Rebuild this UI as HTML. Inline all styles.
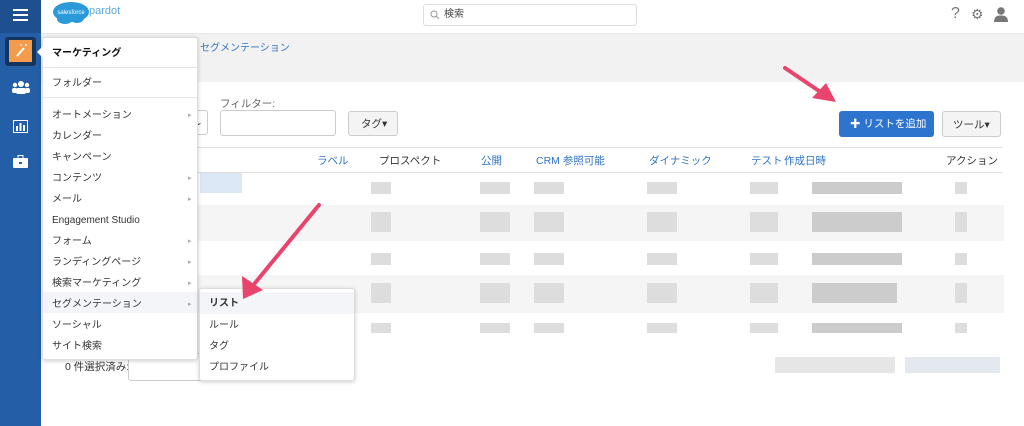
<!DOCTYPE html>
<html><head><meta charset="utf-8"><style>
*{margin:0;padding:0;box-sizing:border-box}
body{width:1024px;height:426px;overflow:hidden;background:#fff;font-family:"Liberation Sans","Noto Sans CJK JP",sans-serif;font-size:11px;color:#333;position:relative}
.a{position:absolute}
.side{left:0;top:0;width:41px;height:426px;background:#235ea6}
.menu{left:42px;top:37px;width:156px;height:323px;background:#fff;border:1px solid #ddd;border-radius:3px;box-shadow:0 1px 4px rgba(0,0,0,.2)}
.mi{position:absolute;left:9px;font-size:10px;line-height:14px;color:#333;white-space:nowrap;margin-top:3px}
.ar{position:absolute;left:145px;font-size:7px;line-height:14px;color:#aaa;margin-top:3px}
.sub{left:199px;top:288px;width:156px;height:93px;background:#fff;border:1px solid #ddd;border-radius:3px;box-shadow:0 1px 4px rgba(0,0,0,.2)}
.th{position:absolute;top:154px;font-size:10.5px;line-height:14px;color:#2f73c4;white-space:nowrap}
.gb{position:absolute;background:#ddd;height:12px}
</style></head><body>
<div class="a side"></div>
<div class="a" style="left:0;top:0;width:41px;height:33px;background:#1e4f8e"></div>
<div class="a" style="left:13px;top:9px;width:15px;height:2px;background:#fff;box-shadow:0 5px 0 #fff,0 10px 0 #fff"></div>
<div class="a" style="left:5px;top:37px;width:31px;height:29px;background:#15355f;border-radius:3px"></div>
<div class="a" style="left:9px;top:40px;width:23px;height:22px;background:#f39c4e"></div>
<svg class="a" style="left:9px;top:40px" width="23" height="22"><line x1="8" y1="16" x2="15" y2="8" stroke="#fff" stroke-width="2"/><circle cx="17" cy="5" r="1" fill="#fff"/><circle cx="12" cy="5" r="0.8" fill="#fff"/></svg>
<svg class="a" style="left:12px;top:80px" width="18" height="14"><circle cx="9" cy="4" r="3" fill="#fff"/><circle cx="3" cy="5" r="2.2" fill="#fff"/><circle cx="15" cy="5" r="2.2" fill="#fff"/><rect x="4" y="8" width="10" height="6" rx="2" fill="#fff"/><rect x="0" y="8" width="5" height="5" rx="2" fill="#fff"/><rect x="13" y="8" width="5" height="5" rx="2" fill="#fff"/></svg>
<svg class="a" style="left:13px;top:120px" width="15" height="13"><rect x="0.5" y="0.5" width="14" height="12" fill="none" stroke="#fff"/><rect x="3" y="6" width="2" height="5" fill="#fff"/><rect x="6.5" y="3" width="2" height="8" fill="#fff"/><rect x="10" y="5" width="2" height="6" fill="#fff"/></svg>
<svg class="a" style="left:13px;top:155px" width="15" height="13"><rect x="5" y="0.5" width="5" height="3" fill="none" stroke="#fff"/><rect x="0" y="3" width="15" height="10" rx="1" fill="#fff"/><rect x="6" y="7" width="3" height="2" fill="#235ea6"/></svg>
<!-- top bar -->
<div class="a" style="left:41px;top:33px;width:983px;height:49px;background:#f2f2f2;border-top:1px solid #e6e6e6"></div>
<svg class="a" style="left:52px;top:0px" width="38" height="28"><ellipse cx="19" cy="12" rx="18" ry="10" fill="#2a9ad8"/><ellipse cx="13" cy="19" rx="8" ry="5" fill="#2a9ad8"/><ellipse cx="25" cy="18" rx="7" ry="5" fill="#2a9ad8"/><text x="19" y="14" font-size="6" fill="#fff" text-anchor="middle" font-family="Liberation Sans">salesforce</text></svg>
<div class="a" style="left:89px;top:4px;font-size:11px;line-height:14px;color:#5ea7dc">pardot</div>
<div class="a" style="left:423px;top:4px;width:214px;height:22px;border:1px solid #ddd;border-radius:3px"></div>
<svg class="a" style="left:430px;top:10px" width="10" height="10"><circle cx="4" cy="4" r="3" fill="none" stroke="#999"/><line x1="6" y1="6" x2="9" y2="9" stroke="#999"/></svg>
<div class="a" style="left:444px;top:8px;font-size:10px;line-height:14px;color:#444">検索</div>
<div class="a" style="left:951px;top:5px;font-size:16px;line-height:18px;color:#777">?</div>
<div class="a" style="left:971px;top:5px;font-size:14px;line-height:18px;color:#777">⚙</div>
<svg class="a" style="left:993px;top:7px" width="16" height="15"><circle cx="8" cy="4" r="3.8" fill="#777"/><path d="M1 15 Q1 8 8 8.5 Q15 8 15 15Z" fill="#777"/></svg>
<div class="a" style="left:200px;top:42px;font-size:10px;line-height:14px;color:#2f73c4">セグメンテーション</div>
<!-- filters -->
<div class="a" style="left:190px;top:110px;width:18px;height:25px;border:1px solid #ccc;border-left:none;border-radius:0 3px 3px 0;font-size:9px;padding:6px 0 0 5px">⌄</div>
<div class="a" style="left:220px;top:97px;font-size:10.5px;line-height:14px;color:#666">フィルター:</div>
<div class="a" style="left:220px;top:110px;width:116px;height:26px;border:1px solid #ccc;border-radius:3px"></div>
<div class="a" style="left:348px;top:111px;width:50px;height:25px;border:1px solid #ccc;border-radius:3px;background:#f4f4f4;font-size:10.5px;line-height:14px;padding:5px 0 0 12px">タグ▾</div>
<div class="a" style="left:839px;top:111px;width:95px;height:26px;background:#2d74cf;border-radius:3px;color:#fff;font-size:10.5px;line-height:14px;padding:6px 0 0 11px">✚ リストを追加</div>
<div class="a" style="left:942px;top:111px;width:59px;height:26px;border:1px solid #ccc;border-radius:3px;background:#f4f4f4;font-size:10.5px;line-height:14px;padding:6px 0 0 10px">ツール▾</div>
<!-- table -->
<div class="a" style="left:192px;top:147px;width:810px;height:1px;background:#ddd"></div>
<div class="a" style="left:192px;top:172px;width:810px;height:1px;background:#ddd"></div>
<div class="th" style="left:317px">ラベル</div>
<div class="th" style="left:379px;color:#333">プロスペクト</div>
<div class="th" style="left:481px">公開</div>
<div class="th" style="left:536px">CRM 参照可能</div>
<div class="th" style="left:649px">ダイナミック</div>
<div class="th" style="left:751px">テスト</div>
<div class="th" style="left:784px">作成日時</div>
<div class="th" style="left:946px;color:#333">アクション</div>
<div class="a" style="left:192px;top:205px;width:812px;height:36px;background:#f5f5f5"></div>
<div class="a" style="left:192px;top:275px;width:812px;height:38px;background:#f5f5f5"></div>
<div class="a" style="left:200px;top:173px;width:42px;height:20px;background:#dde8f6"></div>
<div class="gb" style="left:371px;top:182px;width:20px"></div><div class="gb" style="left:480px;top:182px;width:30px"></div><div class="gb" style="left:534px;top:182px;width:30px"></div><div class="gb" style="left:647px;top:182px;width:30px"></div><div class="gb" style="left:750px;top:182px;width:28px"></div><div class="gb" style="left:812px;top:182px;width:90px;background:#ccc"></div><div class="gb" style="left:955px;top:182px;width:12px"></div>
<div class="gb" style="left:371px;top:212px;width:20px;height:20px"></div><div class="gb" style="left:480px;top:212px;width:30px;height:20px"></div><div class="gb" style="left:534px;top:212px;width:30px;height:20px"></div><div class="gb" style="left:647px;top:212px;width:30px;height:20px"></div><div class="gb" style="left:750px;top:212px;width:28px;height:20px"></div><div class="gb" style="left:812px;top:212px;width:90px;height:20px;background:#ccc"></div><div class="gb" style="left:955px;top:212px;width:12px;height:20px"></div>
<div class="gb" style="left:371px;top:253px;width:20px"></div><div class="gb" style="left:480px;top:253px;width:30px"></div><div class="gb" style="left:534px;top:253px;width:30px"></div><div class="gb" style="left:647px;top:253px;width:30px"></div><div class="gb" style="left:750px;top:253px;width:28px"></div><div class="gb" style="left:812px;top:253px;width:90px;background:#ccc"></div><div class="gb" style="left:955px;top:253px;width:12px"></div>
<div class="gb" style="left:371px;top:283px;width:20px;height:20px"></div><div class="gb" style="left:480px;top:283px;width:30px;height:20px"></div><div class="gb" style="left:534px;top:283px;width:30px;height:20px"></div><div class="gb" style="left:647px;top:283px;width:30px;height:20px"></div><div class="gb" style="left:750px;top:283px;width:28px;height:20px"></div><div class="gb" style="left:812px;top:283px;width:85px;height:20px;background:#ccc"></div><div class="gb" style="left:955px;top:283px;width:12px;height:20px"></div>
<div class="gb" style="left:371px;top:323px;width:20px;height:10px"></div><div class="gb" style="left:480px;top:323px;width:30px;height:10px"></div><div class="gb" style="left:534px;top:323px;width:30px;height:10px"></div><div class="gb" style="left:647px;top:323px;width:30px;height:10px"></div><div class="gb" style="left:750px;top:323px;width:28px;height:10px"></div><div class="gb" style="left:812px;top:323px;width:90px;height:10px;background:#ccc"></div><div class="gb" style="left:955px;top:323px;width:12px;height:10px"></div>
<div class="gb" style="left:775px;top:357px;width:120px;height:16px;background:#e6e6e6"></div>
<div class="gb" style="left:905px;top:357px;width:95px;height:16px;background:#e4e8ef"></div>
<div class="a" style="left:65px;top:360px;font-size:10.5px;line-height:14px">0 件選択済み:</div>
<div class="a" style="left:128px;top:353px;width:75px;height:28px;border:1px solid #ccc;border-radius:3px"></div>
<!-- menu -->
<div class="a menu">
<div class="a" style="left:-6px;top:8px;width:0;height:0;border:6px solid transparent;border-left:none;border-right-color:#fff"></div>
<div class="mi" style="top:6px;font-weight:bold;color:#111">マーケティング</div>
<div style="position:absolute;left:0;top:29px;width:154px;height:1px;background:#e5e5e5"></div>
<div class="mi" style="top:36px">フォルダー</div>
<div style="position:absolute;left:0;top:59px;width:154px;height:1px;background:#e5e5e5"></div>
<div class="mi" style="top:68px">オートメーション</div><div class="ar" style="top:68px">▸</div>
<div class="mi" style="top:89px">カレンダー</div>
<div class="mi" style="top:110px">キャンペーン</div>
<div class="mi" style="top:131px">コンテンツ</div><div class="ar" style="top:131px">▸</div>
<div class="mi" style="top:152px">メール</div><div class="ar" style="top:152px">▸</div>
<div class="mi" style="top:173px">Engagement Studio</div>
<div class="mi" style="top:194px">フォーム</div><div class="ar" style="top:194px">▸</div>
<div class="mi" style="top:215px">ランディングページ</div><div class="ar" style="top:215px">▸</div>
<div class="mi" style="top:236px">検索マーケティング</div><div class="ar" style="top:236px">▸</div>
<div style="position:absolute;left:0;top:254px;width:154px;height:21px;background:#f3f5f9"></div>
<div class="mi" style="top:257px">セグメンテーション</div><div class="ar" style="top:257px">▸</div>
<div class="mi" style="top:278px">ソーシャル</div>
<div class="mi" style="top:299px">サイト検索</div>
</div>
<div class="a sub">
<div style="position:absolute;left:0;top:3px;width:154px;height:22px;background:#f3f5f9"></div>
<div class="mi" style="top:5px;font-weight:bold">リスト</div>
<div class="mi" style="top:27px">ルール</div>
<div class="mi" style="top:48px">タグ</div>
<div class="mi" style="top:69px">プロファイル</div>
</div>
<!-- arrows -->
<svg class="a" style="left:0;top:0" width="1024" height="426">
<line x1="785" y1="68" x2="822" y2="93" stroke="#e9446d" stroke-width="4" stroke-linecap="round"/>
<polygon points="836,102 812,98 826,83" fill="#e9446d"/>
<line x1="319" y1="205" x2="255" y2="283" stroke="#e9446d" stroke-width="4" stroke-linecap="round"/>
<polygon points="243,299 242,276 263,290" fill="#e9446d"/>
</svg>
</body></html>
